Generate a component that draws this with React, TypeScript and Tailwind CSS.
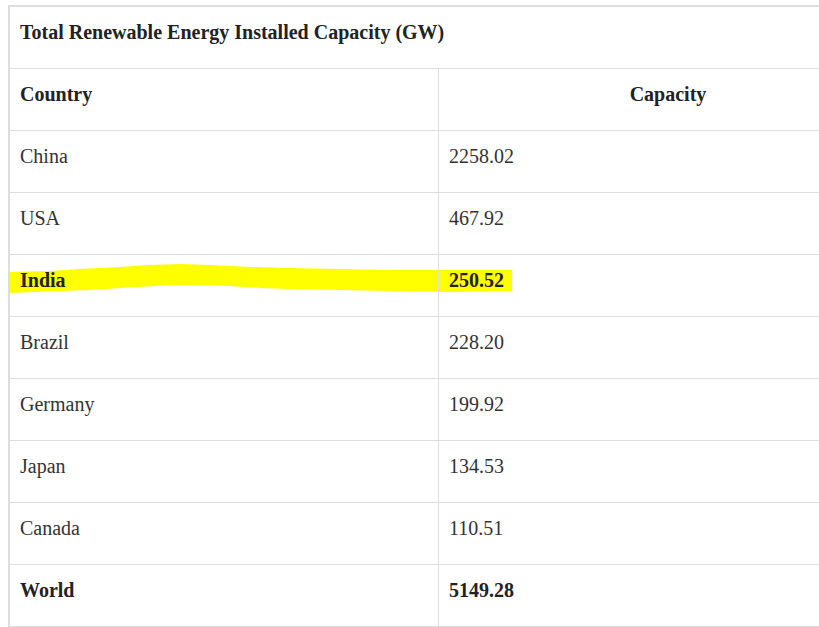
const rows: { country: string; capacity: string; mark?: boolean; bold?: boolean }[] = [
  { country: 'China', capacity: '2258.02' },
  { country: 'USA', capacity: '467.92' },
  { country: 'India', capacity: '250.52', mark: true, bold: true },
  { country: 'Brazil', capacity: '228.20' },
  { country: 'Germany', capacity: '199.92' },
  { country: 'Japan', capacity: '134.53' },
  { country: 'Canada', capacity: '110.51' },
  { country: 'World', capacity: '5149.28', bold: true },
];

function Marker() {
  return (
    <svg className="absolute left-0 top-0 z-0" width="520" height="61" viewBox="0 0 520 61">
      <path
        d="M0 17 L40 16 L70 14 L110 12 L140 10 L170 9 L200 10 L240 12 L280 13 L330 14 L380 15 L430 15 L502 15 L502 36 L440 37 L380 36 L330 35 L280 34 L250 33 L220 31 L195 30 L170 30 L145 31 L110 33 L80 35 L50 36 L0 38 Z"
        fill="#ffff00"
      />
    </svg>
  );
}

export default function App() {
  return (
    <div className="w-[819px] h-[627px] overflow-hidden bg-white" style={{ fontFamily: '"Liberation Serif", "Times New Roman", serif' }}>
      <div className="ml-2 mt-[5px] w-[889px] border-l-2 border-t-2 border-[#dddddd] text-[20px] leading-6 text-[#333333]">
        <div className="h-[62px] border-b border-[#dddddd] px-[10px] pt-[13px] font-bold text-[#222222]">
          Total Renewable Energy Installed Capacity (GW)
        </div>
        <div className="flex h-[62px] border-b border-[#dddddd] font-bold text-[#222222]">
          <div className="w-[428px] px-[10px] pt-[13px]">Country</div>
          <div className="w-[459px] border-l border-[#dddddd] px-[10px] pt-[13px] text-center">Capacity</div>
        </div>
        {rows.map((r) => (
          <div
            key={r.country}
            className={`relative flex h-[62px] border-b border-[#dddddd] ${r.bold ? 'font-bold text-[#222222]' : ''}`}
          >
            {r.mark && <Marker />}
            <div className="relative z-10 w-[428px] px-[10px] pt-[13px]">{r.country}</div>
            <div className="relative z-10 w-[459px] border-l border-[#dddddd] px-[10px] pt-[13px]">{r.capacity}</div>
          </div>
        ))}
      </div>
    </div>
  );
}
